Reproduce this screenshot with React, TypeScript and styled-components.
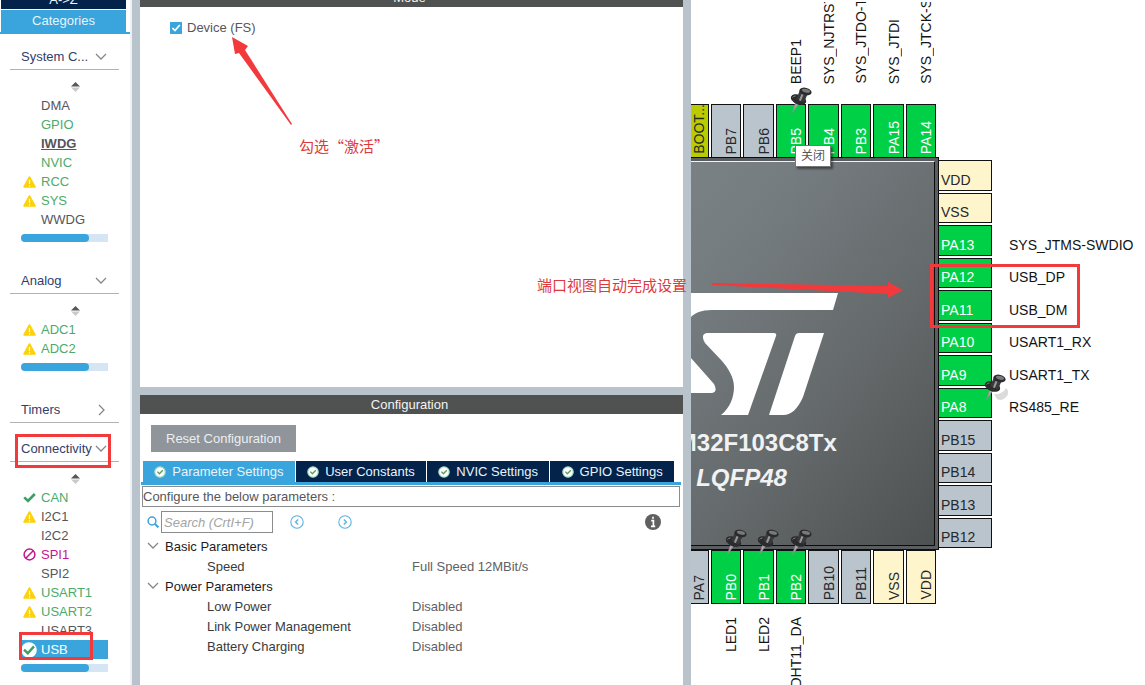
import React from "react";
import styled, { createGlobalStyle, css } from "styled-components";

const color = {
  navy: "#03234b",
  blue: "#39a5dc",
  splitter: "#b8c3cb",
  bar: "#4f5250",
  red: "#f23a3c",
  noteRed: "#e0393b",
  green: "#4bab6a",
  text: "#55565a",
  pink: "#c5158c",
  yellow: "#fdd20a",
};

const Global = createGlobalStyle`
  * { box-sizing: border-box; }
  body { margin: 0; background: #fff; overflow: hidden; }
  body, button, input, table {
    font-family: "Liberation Sans", Arial, "Noto Sans CJK SC", sans-serif;
    font-size: 13px;
    line-height: 19px;
  }
  button { border: 0; padding: 0; margin: 0; background: none; text-align: left; }
  ul { list-style: none; margin: 0; padding: 0; }
`;

const Page = styled.div`
  display: grid;
  grid-template-columns: 132px 8px minmax(0, 543fr) 8px minmax(0, 454fr);
  height: 100vh;
  overflow: hidden;
`;
const Splitter = styled.div`
  background: ${color.splitter};
`;

/* ---------- category sidebar ---------- */

const Sidebar = styled.nav`
  border-right: 2px solid #eef1f4;
  overflow: hidden;
`;
const SortTabs = styled.div`
  display: flex;
  flex-direction: column;
  gap: 1px;
  padding: 0 4px 0 1px;
  border-bottom: 2px solid ${color.blue};
`;
const SortTab = styled.button<{ $active?: boolean }>`
  display: flex;
  align-items: flex-end;
  justify-content: center;
  height: ${(p) => (p.$active ? 22 : 9)}px;
  padding-bottom: ${(p) => (p.$active ? 2 : 0)}px;
  overflow: hidden;
  color: #e9f3fa;
  background: ${(p) => (p.$active ? color.blue : color.navy)};
`;
const Groups = styled.div`
  padding: 10px 11px 0 10px;
`;
const Group = styled.section<{ $tight?: boolean }>`
  margin-bottom: ${(p) => (p.$tight ? 13 : 26)}px;
`;
const GroupHeader = styled.button`
  position: relative;
  display: flex;
  align-items: center;
  justify-content: space-between;
  width: 100%;
  height: 26px;
  padding: 0 12px 0 11px;
  color: #323d6c;
  border-bottom: 1px solid #b0b2b4;
`;
const HeaderName = styled.span`
  white-space: nowrap;
`;
const GroupBody = styled.div`
  padding: 0 11px;
`;
const SortHandle = styled.div`
  display: flex;
  justify-content: center;
  height: 26px;
  padding: 12px 0 0 21px;
`;
type Tone = "plain" | "on" | "conflict" | "focus" | "selected";
const toneStyle = {
  plain: css`color: ${color.text};`,
  on: css`color: ${color.green};`,
  conflict: css`color: ${color.pink};`,
  focus: css`color: ${color.text}; font-weight: bold; text-decoration: underline;`,
  selected: css`color: #fff; background: ${color.blue};`,
};
const ItemButton = styled.button<{ $tone: Tone; $cut?: boolean }>`
  position: relative;
  display: flex;
  align-items: center;
  width: 100%;
  height: 19px;
  ${(p) => toneStyle[p.$tone]}
  ${(p) =>
    p.$cut &&
    css`
      align-items: flex-start;
      height: 13px;
      margin-bottom: 6px;
      overflow: hidden;
    `}
`;
const ItemIcon = styled.span`
  display: flex;
  justify-content: center;
  width: 16px;
  margin-right: 4px;
`;
const Track = styled.div`
  height: 8px;
  margin: 5px 0 0;
  border-radius: 4px 0 0 4px;
  background: #d6e5f3;
`;
const Thumb = styled.div`
  width: 78%;
  height: 8px;
  border-radius: 4px;
  background: ${color.blue};
`;

/* ---------- mode and configuration ---------- */

const Center = styled.main`
  display: grid;
  grid-template-rows: 7px minmax(0, 380fr) 8px 19px minmax(0, 271fr);
  min-width: 0;
`;
const TitleBar = styled.h2`
  display: flex;
  align-items: flex-end;
  justify-content: center;
  margin: 0;
  padding-right: 4px;
  overflow: hidden;
  color: #f4f4f4;
  font-size: 13px;
  font-weight: normal;
  background: ${color.bar};
`;
const ModePanel = styled.section`
  position: relative;
  padding: 11px 30px;
`;
const CheckLabel = styled.label`
  display: flex;
  align-items: center;
  gap: 5px;
  color: ${color.text};
`;
const CheckBox = styled.input`
  appearance: none;
  width: 12px;
  height: 12px;
  margin: 0;
  background: ${color.blue};
`;
const CheckWrap = styled.span`
  position: relative;
  display: flex;
  svg { position: absolute; inset: 0; pointer-events: none; }
`;
const ConfigPanel = styled.section`
  display: flex;
  flex-direction: column;
  padding: 11px 2px 0 1px;
  overflow: hidden;
`;
const ResetButton = styled.button`
  align-self: flex-start;
  height: 27px;
  margin: 0 0 9px 10px;
  padding: 0 15px;
  color: #eceff1;
  background: #8f959b;
`;
const Tabs = styled.div`
  display: flex;
  gap: 1px;
  padding: 0 7px 0 2px;
  border-bottom: 3px solid ${color.blue};
`;
const Tab = styled.button<{ $active?: boolean }>`
  display: flex;
  flex: 1 1 auto;
  align-items: center;
  justify-content: center;
  gap: 6px;
  height: 21px;
  color: #e9f3fa;
  white-space: nowrap;
  background: ${(p) => (p.$active ? color.blue : color.navy)};
`;
const Hint = styled.p`
  height: 21px;
  margin: 1px 1px 0;
  color: ${color.text};
  border: 1px solid #8a8c8e;
`;
const ToolRow = styled.div`
  display: flex;
  align-items: center;
  padding: 4px 20px 0 6px;
`;
const SearchInput = styled.input`
  width: 112px;
  height: 22px;
  margin: 0 17px 0 2px;
  padding: 0 2px;
  border: 1px solid #8a8c8e;
  &::placeholder { color: #a2a4a6; font-style: italic; opacity: 1; }
`;
const IconButton = styled.button<{ $end?: boolean }>`
  display: flex;
  margin-right: ${(p) => (p.$end ? 0 : 34)}px;
  margin-left: ${(p) => (p.$end ? "auto" : 0)};
`;
const ParamTable = styled.table`
  width: 100%;
  margin-top: 3px;
  border-collapse: collapse;
  table-layout: fixed;
  th, td { height: 20px; padding: 0; font-weight: normal; text-align: left; color: #606165; }
  td { padding-left: 1px; }
`;
const NameHead = styled.th<{ $root?: boolean }>`
  width: 50%;
  && {
    padding-left: ${(p) => (p.$root ? 6 : 66)}px;
    color: ${(p) => (p.$root ? "#1c1c1e" : "#3a3b3e")};
  }
`;
const Branch = styled.span`
  display: flex;
  align-items: center;
  gap: 6px;
`;

/* ---------- pinout ---------- */

const Pinout = styled.aside`
  position: relative;
  min-width: 0;
`;
const PinoutClip = styled.div`
  display: flex;
  height: 100vh;
  overflow: hidden;
`;
const ChipColumn = styled.div`
  flex: none;
  width: 248px;
`;
const PinRow = styled.div`
  display: grid;
  grid-template-columns: 18px repeat(7, minmax(0, 1fr));
  column-gap: 2px;
  margin-right: 3px;
`;
type PinKind = "used" | "free" | "power" | "boot";
const pinFill: Record<PinKind, string> = {
  used: "#00d046",
  free: "#b9c4cc",
  power: "#fff5cc",
  boot: "#bacc00",
};
const pinFace = css<{ $kind: PinKind }>`
  position: relative;
  display: flex;
  align-items: flex-end;
  color: ${(p) => (p.$kind === "used" ? "#fff" : "#26282a")};
  background: ${(p) => pinFill[p.$kind]};
  border: 1px solid #111;
  font-size: 14px;
  line-height: 16px;
`;
const TallPin = styled.div<{ $kind: PinKind }>`
  ${pinFace}
  justify-content: flex-end;
  height: 54px;
  padding: 0 1px 3px 0;
  &:first-child { border-left: 0; }
`;
const WidePin = styled.div<{ $kind: PinKind }>`
  ${pinFace}
  padding: 0 0 2px 2px;
  border-left: 0;
`;
const Upright = styled.span`
  writing-mode: vertical-rl;
  rotate: 180deg;
  white-space: nowrap;
`;
const SignalRow = styled(PinRow)<{ $side: "top" | "bottom" }>`
  grid-template-rows: minmax(0, 1fr);
  height: ${(p) => (p.$side === "top" ? 102 : 80)}px;
  margin-top: ${(p) => (p.$side === "top" ? 2 : 13)}px;
  padding-bottom: ${(p) => (p.$side === "top" ? 20 : 0)}px;
  overflow: ${(p) => (p.$side === "top" ? "hidden" : "visible")};
  align-items: ${(p) => (p.$side === "top" ? "end" : "start")};
  font-size: 14px;
  line-height: 16px;
`;
const Signal = styled.div`
  display: flex;
  justify-content: flex-end;
  padding-right: 2px;
  color: #141414;
`;
const ChipFrame = styled.div`
  display: flex;
  justify-content: flex-end;
  height: 393px;
  margin-top: -1px;
  overflow: hidden;
  position: relative;
  border: solid #0c0c0c;
  border-width: 1px 1px 1px 0;
`;
const ChipCase = styled.div`
  flex: none;
  width: 394px;
  padding: 3px 3px 3px 0;
  background: #5a5e60;
`;
const ChipFace = styled.div`
  display: flex;
  flex-direction: column;
  align-items: center;
  height: 100%;
  padding-top: 131px;
  padding-left: 4px;
  color: #f0f2f3;
  font-size: 24px;
  font-weight: bold;
  line-height: 35px;
  border: 1px solid #0c0c0c;
  border-top-color: #f2f2f2;
  background: linear-gradient(130deg, #7f878b 0%, #767d80 35%, #666b6d 65%, #4e5151 100%);
`;
const Part = styled.div`
  margin-top: 10px;
`;
const Package = styled.div`
  font-style: italic;
`;
const SideColumn = styled.div`
  flex: none;
  display: grid;
  grid-template-columns: 53px auto;
  grid-template-rows: repeat(12, minmax(0, 1fr));
  row-gap: 2px;
  column-gap: 17px;
  height: 388px;
  margin-top: 160px;
`;
const SideSignal = styled.div`
  display: flex;
  align-items: flex-end;
  padding-bottom: 3px;
  color: #141414;
  font-size: 14px;
  line-height: 16px;
  white-space: nowrap;
`;
const Tooltip = styled.div`
  position: absolute;
  z-index: 4;
  left: 104px;
  top: 145px;
  padding: 0 5px;
  color: #55565a;
  font-size: 12px;
  line-height: 20px;
  white-space: nowrap;
  background: #fff;
  border: 1px solid #767676;
  box-shadow: 2px 2px 2px rgba(0, 0, 0, 0.45);
`;

/* ---------- red annotations lying over the panels ---------- */

const Outline = styled.span<{ $x: number; $y: number; $w: number; $h: number }>`
  position: absolute;
  z-index: 5;
  left: ${(p) => p.$x}px;
  top: ${(p) => p.$y}px;
  width: ${(p) => p.$w}px;
  height: ${(p) => p.$h}px;
  border: 3px solid ${color.red};
  pointer-events: none;
`;
const Note = styled.div<{ $x: number; $y: number }>`
  position: absolute;
  z-index: 5;
  left: ${(p) => p.$x}px;
  top: ${(p) => p.$y}px;
  color: ${color.noteRed};
  font-family: "Noto Sans CJK SC", sans-serif;
  font-size: 15px;
  line-height: 20px;
  white-space: nowrap;
`;
const Arrow = styled.svg<{ $x: number; $y: number }>`
  position: absolute;
  z-index: 5;
  left: ${(p) => p.$x}px;
  top: ${(p) => p.$y}px;
  fill: ${color.red};
`;
const PushpinSvg = styled.svg<{ $x: number; $y: number }>`
  position: absolute;
  z-index: 3;
  left: ${(p) => p.$x}px;
  top: ${(p) => p.$y}px;
`;

/* ---------- icons ---------- */

const Chevron = ({ right = false }: { right?: boolean }) => (
  <svg width="12" height="12" viewBox="0 0 12 12" fill="none" stroke="#85878a" strokeWidth="1.3">
    <path d={right ? "M4 1l5 5-5 5" : "M1 3l5 5 5-5"} />
  </svg>
);
const Warning = () => (
  <svg width="13" height="12" viewBox="0 0 13 12">
    <path d="M6.5 1 12 11H1z" fill={color.yellow} stroke={color.yellow} strokeWidth="1.6" strokeLinejoin="round" />
    <path d="M6.5 4v4M6.5 9.2v1.3" stroke="#fff" strokeWidth="1.2" />
  </svg>
);
const Tick = () => (
  <svg width="13" height="12" viewBox="0 0 13 12" fill="none" stroke="#3aa065" strokeWidth="2.6">
    <path d="M1.2 5.4 5 9l6.8-7" />
  </svg>
);
const Forbidden = () => (
  <svg width="13" height="13" viewBox="0 0 13 13" fill="none" stroke={color.pink} strokeWidth="1.5">
    <circle cx="6.5" cy="6.5" r="5.4" />
    <path d="M2.8 10.2l7.4-7.4" />
  </svg>
);
const TickDisc = () => (
  <svg width="16" height="16" viewBox="0 0 16 16">
    <circle cx="8" cy="8" r="7.8" fill="#fff" />
    <path d="M3 7.6 6.8 11.2 13 4.4" fill="none" stroke="#3aa065" strokeWidth="2.4" />
  </svg>
);
const TabTick = () => (
  <svg width="12" height="12" viewBox="0 0 12 12">
    <circle cx="6" cy="6" r="5.2" fill="#fff" stroke="#a5dcc0" strokeWidth="1.2" />
    <path d="M3.4 5.6 5.4 7.8 8.8 4.2" fill="none" stroke="#5d9c5f" strokeWidth="1.4" />
  </svg>
);
const SortArrows = () => (
  <svg width="9" height="10" viewBox="0 0 9 10">
    <path d="M4.5 0 9 4.4H0z" fill="#55575a" />
    <path d="M4.5 10 9 5.6H0z" fill="#c9c9c9" />
  </svg>
);
const SearchIcon = () => (
  <svg width="12" height="12" viewBox="0 0 12 12" fill="none" stroke={color.blue} strokeWidth="1.5">
    <circle cx="5" cy="5" r="3.9" />
    <path d="M8 8l3.4 3.4" strokeWidth="2" />
  </svg>
);
const StepIcon = ({ next = false }: { next?: boolean }) => (
  <svg width="14" height="14" viewBox="0 0 14 14" fill="none" stroke="#5ab2e0" strokeWidth="1.1">
    <circle cx="7" cy="7" r="6.2" />
    <path d={next ? "M5.8 4.4 8.4 7 5.8 9.6" : "M8.2 4.4 5.6 7l2.6 2.6"} strokeWidth="1.4" />
  </svg>
);
const InfoIcon = () => (
  <svg width="16" height="16" viewBox="0 0 16 16">
    <circle cx="8" cy="8" r="8" fill="#606060" />
    <path d="M8 2.8v2M6.2 6.6h2.2v5.6M6 12.4h4.2" fill="none" stroke="#fff" strokeWidth="1.7" />
  </svg>
);
const Pushpin = ({ x, y, shadow = false }: { x: number; y: number; shadow?: boolean }) => (
  <PushpinSvg $x={x} $y={y} width="28" height="30" viewBox="0 0 28 30">
    {shadow && <path d="M10 20q8 1 12-6q4 3 1 8q-5 6-10 3z" fill="#000" opacity="0.14" />}
    <path d="M5.500 16 2.500 25.500 8.500 17z" fill="#a9acad" stroke="#8a8c8d" strokeWidth="0.8" />
    <ellipse cx="8.500" cy="12.500" rx="8" ry="4.800" fill="#2b2b2d" transform="rotate(22 8.500 12.500)" />
    <path d="M10 3 6.500 11.500q3 4 8 3L17.500 7z" fill="#38393b" />
    <ellipse cx="15.500" cy="4.500" rx="6.200" ry="3.700" fill="#2b2b2d" transform="rotate(14 15.500 4.500)" />
    <ellipse cx="16" cy="3.800" rx="4.200" ry="1.800" fill="#77797b" transform="rotate(14 16 3.800)" />
    <path d="M11.500 7 9 13.200l1.800.8 2.700-6.300z" fill="#97999b" />
    <path d="M2.500 10.500q1-1.500 3-1.500" fill="none" stroke="#7d7f81" strokeWidth="1" />
  </PushpinSvg>
);
const StLogo = () => (
  <svg width="192" height="122" viewBox="0 0 192 122" fill="#fff">
    <path d="M192 0 187 17H66C55 17 49 20 45 24 35 36 37 55 45 65L68 91Q72 99 66 100H0L26 12Q30 0 40 0Z" />
    <path d="M61 40H128Q131 40 130 43L102 122H75C84 115 88 104 88 94 88 84 82 75 76 68L59 50Q54 41 61 40Z" />
    <path d="M153 40H178L157 104C152 115 146 122 137 122H123L149 43Q150 40 153 40Z" />
  </svg>
);

/* ---------- data ---------- */

type Item = { name: string; tone?: Tone; icon?: React.ReactNode; cut?: boolean };
type GroupData = { title: string; label: string; items?: Item[]; marked?: boolean };

const groups: GroupData[] = [
  {
    title: "System Core",
    label: "System C...",
    items: [
      { name: "DMA" },
      { name: "GPIO", tone: "on" },
      { name: "IWDG", tone: "focus" },
      { name: "NVIC", tone: "on" },
      { name: "RCC", tone: "on", icon: <Warning /> },
      { name: "SYS", tone: "on", icon: <Warning /> },
      { name: "WWDG" },
    ],
  },
  {
    title: "Analog",
    label: "Analog",
    items: [
      { name: "ADC1", tone: "on", icon: <Warning /> },
      { name: "ADC2", tone: "on", icon: <Warning /> },
    ],
  },
  { title: "Timers", label: "Timers" },
  {
    title: "Connectivity",
    label: "Connectivity",
    marked: true,
    items: [
      { name: "CAN", tone: "on", icon: <Tick /> },
      { name: "I2C1", icon: <Warning /> },
      { name: "I2C2" },
      { name: "SPI1", tone: "conflict", icon: <Forbidden /> },
      { name: "SPI2" },
      { name: "USART1", tone: "on", icon: <Warning /> },
      { name: "USART2", tone: "on", icon: <Warning /> },
      { name: "USART3", cut: true },
      { name: "USB", tone: "selected", icon: <TickDisc /> },
    ],
  },
];

type Pin = { name: string; kind: PinKind; signal?: string; pinned?: boolean };

const topPins: Pin[] = [
  { name: "BOOT...", kind: "boot" },
  { name: "PB7", kind: "free" },
  { name: "PB6", kind: "free" },
  { name: "PB5", kind: "used", signal: "BEEP1", pinned: true },
  { name: "PB4", kind: "used", signal: "SYS_NJTRST" },
  { name: "PB3", kind: "used", signal: "SYS_JTDO-T" },
  { name: "PA15", kind: "used", signal: "SYS_JTDI" },
  { name: "PA14", kind: "used", signal: "SYS_JTCK-S" },
];
const rightPins: Pin[] = [
  { name: "VDD", kind: "power" },
  { name: "VSS", kind: "power" },
  { name: "PA13", kind: "used", signal: "SYS_JTMS-SWDIO" },
  { name: "PA12", kind: "used", signal: "USB_DP" },
  { name: "PA11", kind: "used", signal: "USB_DM" },
  { name: "PA10", kind: "used", signal: "USART1_RX" },
  { name: "PA9", kind: "used", signal: "USART1_TX" },
  { name: "PA8", kind: "used", signal: "RS485_RE", pinned: true },
  { name: "PB15", kind: "free" },
  { name: "PB14", kind: "free" },
  { name: "PB13", kind: "free" },
  { name: "PB12", kind: "free" },
];
const bottomPins: Pin[] = [
  { name: "PA7", kind: "free" },
  { name: "PB0", kind: "used", signal: "LED1", pinned: true },
  { name: "PB1", kind: "used", signal: "LED2", pinned: true },
  { name: "PB2", kind: "used", signal: "DHT11_DA", pinned: true },
  { name: "PB10", kind: "free" },
  { name: "PB11", kind: "free" },
  { name: "VSS", kind: "power" },
  { name: "VDD", kind: "power" },
];

const params = [
  { title: "Basic Parameters", rows: [["Speed", "Full Speed 12MBit/s"]] },
  {
    title: "Power Parameters",
    rows: [
      ["Low Power", "Disabled"],
      ["Link Power Management", "Disabled"],
      ["Battery Charging", "Disabled"],
    ],
  },
];
const tabs = ["Parameter Settings", "User Constants", "NVIC Settings", "GPIO Settings"];

/* ---------- composition ---------- */

const CategoryGroup = ({ group }: { group: GroupData }) => (
  <Group $tight={!group.items}>
    <GroupHeader title={group.title}>
      <HeaderName>{group.label}</HeaderName>
      <Chevron right={!group.items} />
      {group.marked && <Outline $x={5} $y={-2} $w={96} $h={34} />}
    </GroupHeader>
    {group.items && (
      <GroupBody>
        <SortHandle>
          <SortArrows />
        </SortHandle>
        <ul>
          {group.items.map((item) => (
            <li key={item.name}>
              <ItemButton $tone={item.tone ?? "plain"} $cut={item.cut}>
                <ItemIcon>{item.icon}</ItemIcon>
                {item.name}
                {item.tone === "selected" && <Outline $x={-2} $y={-8} $w={74} $h={28} />}
              </ItemButton>
            </li>
          ))}
        </ul>
        <Track>
          <Thumb />
        </Track>
      </GroupBody>
    )}
  </Group>
);

const PinStrip = ({ pins, pinTop }: { pins: Pin[]; pinTop: number }) => (
  <PinRow>
    {pins.map((pin) => (
      <TallPin key={pin.name} $kind={pin.kind}>
        <Upright>{pin.name}</Upright>
        {pin.pinned && <Pushpin x={13} y={pinTop} />}
      </TallPin>
    ))}
  </PinRow>
);

const SignalStrip = ({ pins, side }: { pins: Pin[]; side: "top" | "bottom" }) => (
  <SignalRow $side={side}>
    {pins.map((pin) => (
      <Signal key={pin.name}>
        <Upright>{pin.signal}</Upright>
      </Signal>
    ))}
  </SignalRow>
);

export default function App() {
  return (
    <>
      <Global />
      <Page>
        <Sidebar>
          <SortTabs>
            <SortTab>A-&gt;Z</SortTab>
            <SortTab $active>Categories</SortTab>
          </SortTabs>
          <Groups>
            {groups.map((group) => (
              <CategoryGroup key={group.title} group={group} />
            ))}
          </Groups>
        </Sidebar>
        <Splitter />
        <Center>
          <TitleBar>Mode</TitleBar>
          <ModePanel>
            <CheckLabel>
              <CheckWrap>
                <CheckBox type="checkbox" defaultChecked />
                <svg width="12" height="12" viewBox="0 0 12 12" fill="none" stroke="#fff" strokeWidth="1.7">
                  <path d="M2.400 6 5 8.600 9.800 3" />
                </svg>
              </CheckWrap>
              Device (FS)
            </CheckLabel>
            <Arrow $x={92} $y={30} width="61" height="89" viewBox="0 0 61 89">
              <path d="M0 0 16 9 13 13 60 87 59 88 7 16 3 17Z" />
            </Arrow>
            <Note $x={159} $y={129}>勾选“激活”</Note>
          </ModePanel>
          <Splitter />
          <TitleBar>Configuration</TitleBar>
          <ConfigPanel>
            <ResetButton>Reset Configuration</ResetButton>
            <Tabs>
              {tabs.map((tab, i) => (
                <Tab key={tab} $active={i === 0}>
                  <TabTick />
                  {tab}
                </Tab>
              ))}
            </Tabs>
            <Hint>Configure the below parameters :</Hint>
            <ToolRow>
              <SearchIcon />
              <SearchInput aria-label="Search" placeholder="Search (CrtI+F)" />
              <IconButton aria-label="Previous">
                <StepIcon />
              </IconButton>
              <IconButton aria-label="Next">
                <StepIcon next />
              </IconButton>
              <IconButton $end aria-label="Information">
                <InfoIcon />
              </IconButton>
            </ToolRow>
            <ParamTable>
              {params.map((section) => (
                <tbody key={section.title}>
                  <tr>
                    <NameHead $root>
                      <Branch>
                        <Chevron />
                        {section.title}
                      </Branch>
                    </NameHead>
                    <td />
                  </tr>
                  {section.rows.map(([name, value]) => (
                    <tr key={name}>
                      <NameHead scope="row">{name}</NameHead>
                      <td>{value}</td>
                    </tr>
                  ))}
                </tbody>
              ))}
            </ParamTable>
          </ConfigPanel>
        </Center>
        <Splitter />
        <Pinout>
          <PinoutClip>
            <ChipColumn>
              <SignalStrip pins={topPins} side="top" />
              <PinStrip pins={topPins} pinTop={-18} />
              <ChipFrame>
                <ChipCase>
                  <ChipFace>
                    <StLogo />
                    <Part>STM32F103C8Tx</Part>
                    <Package>LQFP48</Package>
                  </ChipFace>
                </ChipCase>
              </ChipFrame>
              <PinStrip pins={bottomPins} pinTop={-22} />
              <SignalStrip pins={bottomPins} side="bottom" />
            </ChipColumn>
            <SideColumn>
              {rightPins.map((pin) => (
                <React.Fragment key={pin.name}>
                  <WidePin $kind={pin.kind}>
                    {pin.name}
                    {pin.pinned && <Pushpin x={45} y={-15} shadow />}
                  </WidePin>
                  <SideSignal>{pin.signal}</SideSignal>
                </React.Fragment>
              ))}
            </SideColumn>
          </PinoutClip>
          <Tooltip role="tooltip">关闭</Tooltip>
          <Outline $x={239} $y={264} $w={150} $h={64} />
          <Note $x={-154} $y={275}>端口视图自动完成设置</Note>
          <Arrow $x={21} $y={282} width="192" height="16" viewBox="0 0 192 16">
            <path d="M0 1 176 4V0L191 8 176 16V12L0 3Z" />
          </Arrow>
        </Pinout>
      </Page>
    </>
  );
}
